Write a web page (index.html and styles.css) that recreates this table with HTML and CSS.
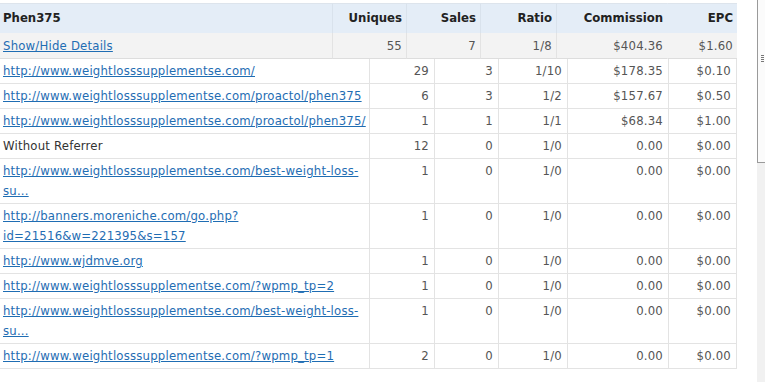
FILE: index.html
```html
<!doctype html>
<html lang="en">
  <head>
    <meta charset="UTF-8" />
    <meta name="viewport" content="width=device-width, initial-scale=1.0" />
    <title>Referrer Stats</title>
    <link rel="stylesheet" href="styles.css">
  </head>
  <body>
    <div class="page">
      <div class="report-wrap">
        <table class="report">
          <thead>
            <tr class="head">
              <th class="name">Phen375</th>
              <th class="c-uniq">Uniques</th>
              <th class="c-sales">Sales</th>
              <th class="c-ratio">Ratio</th>
              <th class="c-comm no-sep">Commission</th>
              <th class="c-epc">EPC</th>
            </tr>
          </thead>
          <tbody>
            <tr class="summary">
              <td class="name"><a href="#">Show/Hide Details</a></td>
              <td>55</td>
              <td>7</td>
              <td>1/8</td>
              <td class="no-sep">$404.36</td>
              <td>$1.60</td>
            </tr>
            <tr>
              <td colspan="6" class="details-cell">
                <table class="details">
                  <tr>
                    <td class="ref"><a href="#">http://www.weightlosssupplementse.com/</a></td>
                    <td class="d-uniq">29</td><td class="d-sales">3</td><td class="d-ratio">1/10</td>
                    <td class="d-comm">$178.35</td><td class="d-epc">$0.10</td>
                  </tr>
                  <tr>
                    <td class="ref"><a href="#">http://www.weightlosssupplementse.com/proactol/phen375</a></td>
                    <td class="d-uniq">6</td><td class="d-sales">3</td><td class="d-ratio">1/2</td>
                    <td class="d-comm">$157.67</td><td class="d-epc">$0.50</td>
                  </tr>
                  <tr>
                    <td class="ref"><a href="#">http://www.weightlosssupplementse.com/proactol/phen375/</a></td>
                    <td class="d-uniq">1</td><td class="d-sales">1</td><td class="d-ratio">1/1</td>
                    <td class="d-comm">$68.34</td><td class="d-epc">$1.00</td>
                  </tr>
                  <tr>
                    <td class="ref">Without Referrer</td>
                    <td class="d-uniq">12</td><td class="d-sales">0</td><td class="d-ratio">1/0</td>
                    <td class="d-comm">0.00</td><td class="d-epc">$0.00</td>
                  </tr>
                  <tr>
                    <td class="ref"><a href="#">http://www.weightlosssupplementse.com/best-weight-loss-<br>su...</a></td>
                    <td class="d-uniq">1</td><td class="d-sales">0</td><td class="d-ratio">1/0</td>
                    <td class="d-comm">0.00</td><td class="d-epc">$0.00</td>
                  </tr>
                  <tr>
                    <td class="ref"><a href="#">http://banners.moreniche.com/go.php?<br>id=21516&amp;w=221395&amp;s=157</a></td>
                    <td class="d-uniq">1</td><td class="d-sales">0</td><td class="d-ratio">1/0</td>
                    <td class="d-comm">0.00</td><td class="d-epc">$0.00</td>
                  </tr>
                  <tr>
                    <td class="ref"><a href="#">http://www.wjdmve.org</a></td>
                    <td class="d-uniq">1</td><td class="d-sales">0</td><td class="d-ratio">1/0</td>
                    <td class="d-comm">0.00</td><td class="d-epc">$0.00</td>
                  </tr>
                  <tr>
                    <td class="ref"><a href="#">http://www.weightlosssupplementse.com/?wpmp_tp=2</a></td>
                    <td class="d-uniq">1</td><td class="d-sales">0</td><td class="d-ratio">1/0</td>
                    <td class="d-comm">0.00</td><td class="d-epc">$0.00</td>
                  </tr>
                  <tr>
                    <td class="ref"><a href="#">http://www.weightlosssupplementse.com/best-weight-loss-<br>su...</a></td>
                    <td class="d-uniq">1</td><td class="d-sales">0</td><td class="d-ratio">1/0</td>
                    <td class="d-comm">0.00</td><td class="d-epc">$0.00</td>
                  </tr>
                  <tr>
                    <td class="ref"><a href="#">http://www.weightlosssupplementse.com/?wpmp_tp=1</a></td>
                    <td class="d-uniq">2</td><td class="d-sales">0</td><td class="d-ratio">1/0</td>
                    <td class="d-comm">0.00</td><td class="d-epc">$0.00</td>
                  </tr>
                </table>
              </td>
            </tr>
          </tbody>
        </table>
      </div>
      <div class="scrollbar">
        <div class="thumb"></div>
      </div>
    </div>
  </body>
</html>
```

FILE: styles.css
```css
body {
  margin: 0;
  padding: 0;
  background-color: #ffffff;
  font-family: "DejaVu Sans Condensed", "DejaVu Sans", sans-serif;
  font-size: 13px;
  color: #333333;
}

.page {
  display: flex;
  height: 382px;
  overflow: hidden;
}

.report-wrap {
  width: 737px;
  padding-top: 3px;
}

a {
  color: #1f6db3;
  text-decoration: underline;
}

table {
  border-collapse: separate;
  border-spacing: 0;
}

.report {
  width: 737px;
  table-layout: fixed;
}

.report th,
.report td {
  line-height: 20px;
  text-align: right;
  padding: 2px 4px 2px 3px;
  white-space: nowrap;
}

.report .name {
  text-align: left;
  width: 325px;
}
.report .c-uniq { width: 66px; }
.report .c-sales { width: 66px; }
.report .c-ratio { width: 68px; }
.report .c-comm { width: 103px; }

/* header row */
.head th {
  background-color: #e4edf7;
  font-weight: bold;
  color: #222222;
  padding-top: 4px;
  padding-bottom: 5px;
  border-top: 1px solid #dde4ec;
  border-right: 1px solid #d9e2ec;
}
.head th:last-child {
  border-right: none;
}

/* totals row */
.summary td {
  background-color: #f3f3f3;
  color: #555555;
  letter-spacing: 0.2px;
  padding-top: 3px;
  border-right: 1px solid #e3e3e3;
  border-bottom: 1px solid #dddddd;
}
.summary td:last-child {
  border-right: none;
}
.report .no-sep {
  border-right-color: transparent;
}

.report .details-cell {
  padding: 0;
}

/* referrer rows */
.details {
  width: 100%;
  table-layout: fixed;
}
.details td {
  line-height: 20px;
  padding: 2px 5px 2px 3px;
  vertical-align: top;
  text-align: right;
  color: #555555;
  letter-spacing: 0.2px;
  border-bottom: 1px solid #e3e3e3;
  border-right: 1px solid #e3e3e3;
  white-space: nowrap;
}
.details .ref {
  text-align: left;
  color: #333333;
  width: 361px;
}
.details .d-uniq { width: 56px; }
.details .d-sales { width: 55px; }
.details .d-ratio { width: 60px; }
.details .d-comm { width: 92px; }

/* cropped scroll bar at the right edge */
.scrollbar {
  margin-left: 20px;
  width: 8px;
  background-color: #f1f1f1;
}
.thumb {
  position: relative;
  height: 162px;
  background-color: #fbfbfb;
  border-left: 1px solid #9a9a9a;
  border-bottom: 1px solid #9a9a9a;
}
.thumb::after {
  content: "";
  position: absolute;
  left: 3px;
  top: 55px;
  width: 3px;
  height: 7px;
  background: repeating-linear-gradient(#777777 0 1px, transparent 1px 2px);
}
```
